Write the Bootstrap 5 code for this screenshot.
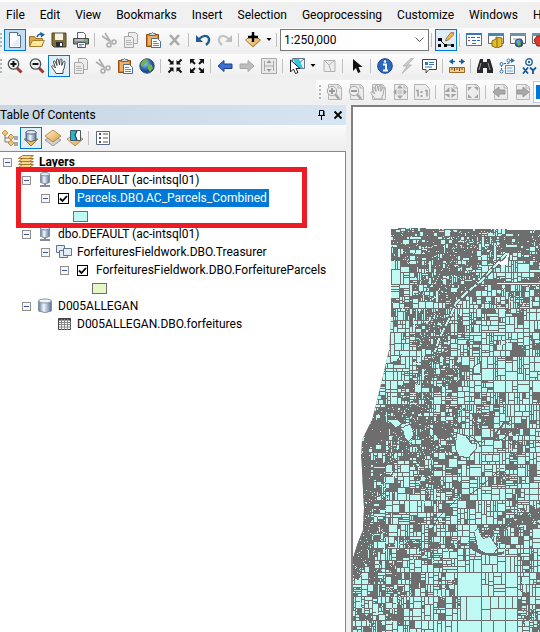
<!DOCTYPE html>
<html lang="en">
<head>
<meta charset="utf-8">
<meta name="viewport" content="width=device-width, initial-scale=1">
<title>Parcel map</title>
<link rel="stylesheet" href="https://cdn.jsdelivr.net/npm/bootstrap@5.3.0/dist/css/bootstrap.min.css">
<style>
  body { font-family: Roboto, "Open Sans", sans-serif; font-size: 12px; line-height: 18px; color: #000; background: #f0f0f0; }
  svg { display: block; flex: none; }
  .app { border-top: 2px solid #fff; }
  .menu-strip { height: 26px; gap: 15px; padding-left: 6px; }
  .menu-strip a { color: #000; text-decoration: none; white-space: nowrap; }
  .tool-strip { height: 24px; margin-bottom: 2px; background: linear-gradient(#fcfcfc, #eeeeee); overflow: hidden; }
  .tool-strip.paging { margin-left: 316px; margin-bottom: 1px; }
  .grip { flex: none; width: 2px; height: 15px; margin-right: 2px; background: repeating-linear-gradient(#b4b4b4 0 2px, transparent 2px 4px); }
  .paging .grip { margin: 0 2px 0 3px; }
  .tool { flex: none; display: flex; align-items: center; justify-content: center; width: 22px; height: 22px; padding: 0; border: 1px solid transparent; background: none; }
  .tool.pressed { border-color: #0078d7; background: #e0eefa; }
  .tool.strong { background: #c2def5; }
  .tool.caret { width: 10px; }
  .rule { flex: none; width: 2px; height: 14px; margin: 0 2px; border-left: 1px solid #c0c0c0; }
  .scale-box { flex: none; width: 149px; height: 22px; padding: 0 3px; border: 1px solid #7a7a7a; border-radius: 0; appearance: none; line-height: 18px; color: #000;
    background: #fff url("data:image/svg+xml,%3Csvg xmlns='http://www.w3.org/2000/svg' width='9' height='6'%3E%3Cpath d='M.5.5l4 4 4-4' fill='none' stroke='%23555'/%3E%3C/svg%3E") no-repeat right 4px center; }
  .page-box { flex: none; width: 100px; height: 22px; padding: 2px 3px; border: 1px solid #b4cbe0; background: linear-gradient(#0078d7, #0078d7) 2px center / 90px 14px no-repeat #fff; }
  .contents { width: 346px; }
  .contents-title { height: 20px; background: linear-gradient(90deg, #c8d5e3, #d7e4f2); }
  .contents-tools { height: 26px; background: linear-gradient(#fafafa, #eeeeee); }
  .tree-view { border-top: 1px solid #828790; border-right: 1px solid #828790; padding-top: 1px; }
  .tree-view ul { list-style: none; margin: 0; padding-left: 19px; }
  .tree-view > ul { padding-left: 3px; }
  .tree-row { height: 18px; white-space: nowrap; }
  .tree-row .glyph { margin: 0 5px 0 6px; }
  .tree-row .leaf { margin-left: 15px; }
  .fold { flex: none; width: 9px; height: 9px; padding: 0; border: 1px solid #919191; background: linear-gradient(#3c5a9a, #3c5a9a) center / 5px 1px no-repeat #f6f6f6; }
  .tick { flex: none; width: 11px; height: 11px; margin: 0 8px; border: 1px solid #000; border-radius: 0; appearance: none; background: #fff; }
  .tick:checked { background: #fff url("data:image/svg+xml,%3Csvg xmlns='http://www.w3.org/2000/svg' width='9' height='9'%3E%3Cpath d='M1 4.5l2.5 2.5L8 2' fill='none' stroke='%23000' stroke-width='1.8'/%3E%3C/svg%3E") center no-repeat; }
  .picked { padding: 0 2px; margin-left: -2px; color: #fff; background: #0078d7; }
  .swatch { width: 15px; height: 11px; margin-left: 32px; border: 1px solid #6e6e6e; }
  .swatch.aqua { background: #befaf3; }
  .swatch.lime { background: #e7f8c8; }
  .callout { position: absolute; left: 16px; top: 15px; width: 291px; height: 61px; border: 5px solid #ed1c24; pointer-events: none; }
  .map-pane { margin-left: 5px; border-left: 2px solid #808080; border-top: 2px solid #808080; min-width: 0; }
</style>
<script src="https://cdn.jsdelivr.net/npm/bootstrap@5.3.0/dist/js/bootstrap.bundle.min.js"></script>
</head>
<body>
<svg width="0" height="0" class="position-absolute" aria-hidden="true">
  <defs>
    <linearGradient id="steel" x2="1"><stop stop-color="#5f7898"/><stop offset=".4" stop-color="#f2f7fd"/><stop offset="1" stop-color="#566f90"/></linearGradient>
    <linearGradient id="amber" y2="1" x2="1"><stop stop-color="#fff3cb"/><stop offset="1" stop-color="#dd9a3a"/></linearGradient>
    <radialGradient id="sea" cx=".4" cy=".35"><stop stop-color="#8ec5f2"/><stop offset="1" stop-color="#164a9b"/></radialGradient>
  </defs>
  <symbol id="new" viewBox="0 0 16 16"><path d="M2.500.5h8l3 3v12h-11z" fill="#fff" stroke="#5d6f86"/><path d="M4 14L12 5v9z" fill="#e3edf8"/><path d="M10.500.5v3h3" fill="#dce8f4" stroke="#5d6f86"/></symbol>
  <symbol id="open" viewBox="0 0 16 16"><path d="M.5 14V4.500h5l1 2h7V14z" fill="#d9a94b" stroke="#9b7426"/><path d="M.5 14.500l3-6h12l-3 6z" fill="#ffe89b" stroke="#a9822f"/><path d="M8 5q1-3 4-3" fill="none" stroke="#1d5f9e" stroke-width="1.500"/><path d="M11 0l5 2.500-4 3z" fill="#1d5f9e"/></symbol>
  <symbol id="save" viewBox="0 0 16 16"><path d="M1 1h14v14H3l-2-2z" fill="#81703a" stroke="#4d4528"/><path d="M4 1.500h8V8H4z" fill="#f3f1e4"/><path d="M5 10h7v5H5z" fill="#292b2e"/><path d="M9 11h2v3H9z" fill="#fff"/></symbol>
  <symbol id="print" viewBox="0 0 16 16"><path d="M4.500 6V.5h6l2 2V6" fill="#fff" stroke="#596270"/><path d="M.5 6.500h15V12H.5z" fill="#8c8c88" stroke="#42474c"/><path d="M2 8h9" stroke="#e6e6dc"/><path d="M12 8h2" stroke="#62d24a" stroke-width="2"/><path d="M4.500 10.500h8v5h-8z" fill="#fff" stroke="#4c5664"/><path d="M6 12.500h5M6 14h3" stroke="#789"/></symbol>
  <symbol id="cut" viewBox="0 0 16 16"><g fill="none" stroke="#acacac" stroke-width="1.600"><path d="M4 1l5 8M1 4l9 6"/><circle cx="8" cy="13" r="2"/><circle cx="13" cy="10" r="2"/></g></symbol>
  <symbol id="copy" viewBox="0 0 16 16"><g fill="#ececec" stroke="#a8a8a8"><path d="M5.500.5h7l2 2v9h-9z"/><path d="M1.500 4.500h7l2 2v9h-9z"/></g><path d="M3 8.500h5M3 10.500h6M3 12.500h6" stroke="#b6b6b6"/></symbol>
  <symbol id="paste" viewBox="0 0 16 16"><path d="M1.500 2.500h12v12h-12z" fill="#d9852c" stroke="#8d4c16"/><path d="M3 4h9v9H3z" fill="#f0b063"/><path d="M4.500 3.500v-2h2l1-1 1 1h2v2z" fill="#d4dbe2" stroke="#626b75"/><path d="M6.500 6.500h6l3 3v6h-9z" fill="#fff" stroke="#476ea1"/><path d="M8 9.500h4M8 11.500h6M8 13.500h6" stroke="#5b8bca"/></symbol>
  <symbol id="delete" viewBox="0 0 16 16"><path d="M3 3l9 10M12 3L3 13" stroke="#aaa" stroke-width="2.600"/></symbol>
  <symbol id="undo" viewBox="0 0 16 16"><path d="M4 7q5-5 9-2 3 4-2 8" fill="none" stroke="#1f5c93" stroke-width="2.400"/><path d="M1 3v7h7z" fill="#1f5c93"/></symbol>
  <symbol id="redo" viewBox="0 0 16 16"><path d="M12 7Q7 2 3 5q-3 4 2 8" fill="none" stroke="#c5c5c5" stroke-width="2.400"/><path d="M15 3v7H8z" fill="#bdbdbd"/></symbol>
  <symbol id="add" viewBox="0 0 16 16"><path d="M.5 8L8 2.500 15.500 8 8 15z" fill="url(#amber)" stroke="#9e783c"/><path d="M8 0v10M3 5h10" stroke="#000" stroke-width="2.400"/></symbol>
  <symbol id="caret" viewBox="0 0 6 4"><path d="M.5 0h5L3 3z"/></symbol>
  <symbol id="editor" viewBox="0 0 16 16"><path d="M2 8l5 5h7" stroke="#111" fill="none"/><path d="M0 6h4v3H0zM0 12h3v3H0zM6 12h3v3H6zM13 12h3v3h-3z"/><path d="M7.500 9l1-3 5-6 3 2-6 6z" fill="#f5b94c" stroke="#74542c" stroke-width=".7"/><path d="M13.500 0l3 2" stroke="#d66b6b" stroke-width="2"/></symbol>
  <symbol id="toc" viewBox="0 0 16 16"><path d="M.5 1.500h15v12H.5z" fill="#fff" stroke="#49729e"/><path d="M0 1h16v2H0z" fill="#3877b5"/><path d="M2 5.500h2M2 8.500h2" stroke="#d13535"/><path d="M5 5.500h4M6 8.500h4M6 11.500h4M11 5.500h3M11 8.500h3" stroke="#2869c5"/></symbol>
  <symbol id="catalog" viewBox="0 0 16 16"><path d="M.5 1.500h15v10H.5z" fill="#fff" stroke="#666"/><path d="M0 1h16v3H0z" fill="#4387be"/><path d="M4 9l4-2V5l6 1v8l-5 2-5-2z" fill="#e4bd28" stroke="#856716"/><path d="M9 6v9" stroke="#856716"/></symbol>
  <symbol id="search" viewBox="0 0 16 16"><path d="M.5 1.500h15v10H.5z" fill="#fff" stroke="#666"/><path d="M0 1h16v3H0z" fill="#6c92ad"/><path d="M3 7h9" stroke="#999"/><circle cx="9" cy="11" r="4" fill="url(#sea)" stroke="#456"/><path d="M7 9l3 1 1 3-3 1z" fill="#6cb55b"/></symbol>
  <symbol id="toolbox" viewBox="0 0 16 16"><path d="M.5 1.500h15v10H.5z" fill="#fff" stroke="#666"/><path d="M0 1h16v3H0z" fill="#6c92ad"/><path d="M2 8l3-4h8v10H5z" fill="#d93a2d" stroke="#8b201a"/></symbol>
  <symbol id="zoomin" viewBox="0 0 16 16"><path d="M10 10l4.500 4.500" stroke="#a4362b" stroke-width="3"/><circle cx="6.500" cy="6" r="5.200" fill="#eef3f6" stroke="#4c5155" stroke-width="1.300"/><path d="M3.500 6h6M6.500 3v6" stroke="#111" stroke-width="2"/></symbol>
  <symbol id="zoomout" viewBox="0 0 16 16"><path d="M10 10l4.500 4.500" stroke="#a4362b" stroke-width="3"/><circle cx="6.500" cy="6" r="5.200" fill="#eef3f6" stroke="#4c5155" stroke-width="1.300"/><path d="M3.500 6h6" stroke="#111" stroke-width="2"/></symbol>
  <symbol id="hand" viewBox="0 0 16 16"><path d="M5 15.500C4 13 1 10 .7 8.500 1 7 3 8 4.500 10L2.500 4C2.500 2.500 4 2.500 4.500 4L6 7.500 5.500 2C5.600.5 7.300.5 7.500 2L8.500 7 9 2c.3-1.500 2-1.300 2 0l-.3 5.500L12.300 4c.6-1.300 2-.8 1.700.5-.5 3-.5 6-2 8v3z" fill="#fff" stroke="#454545"/></symbol>
  <symbol id="globe" viewBox="0 0 16 16"><circle cx="8" cy="8" r="7.200" fill="url(#sea)" stroke="#34506d"/><path d="M3 3q4-3 6-1l-1 3-3 1-1 3-2-1zM9 6l4 1 1 3-3 4-2-3z" fill="#72b54e"/></symbol>
  <symbol id="shrink" viewBox="0 0 16 16"><path d="M1.500 1.500l4 4M14.500 1.500l-4 4M1.500 14.500l4-4M14.500 14.500l-4-4" stroke="#111" stroke-width="2"/><path d="M6.500 2v4.500H2zM9.500 2v4.500H14zM6.500 14V9.500H2zM9.500 14V9.500H14z" fill="#111"/></symbol>
  <symbol id="grow" viewBox="0 0 16 16"><path d="M2 2l4 4M14 2l-4 4M2 14l4-4M14 14l-4-4" stroke="#111" stroke-width="2"/><path d="M1 1h5L1 6zM15 1h-5l5 5zM1 15h5l-5-5zM15 15h-5l5-5z" fill="#111"/></symbol>
  <symbol id="back" viewBox="0 0 16 16"><path d="M1 8l6-5.500V6h8v4.500H7v3z" fill="#3c6fd1" stroke="#1d3f90"/></symbol>
  <symbol id="forward" viewBox="0 0 16 16"><path d="M15 8L9 2.500V6H1v4.500h8v3z" fill="#bdbdbd" stroke="#a8a8a8"/></symbol>
  <symbol id="fit" viewBox="0 0 16 16"><path d="M.5.5h15v15H.5z" fill="#e8e8e8" stroke="#aaa"/><path d="M3 8h10M3.500 3v10M12.500 3v10" stroke="#aaa"/><path d="M8 2l2.500 3h-5zM8 14l2.500-3h-5z" fill="#999"/></symbol>
  <symbol id="select" viewBox="0 0 16 16"><path d="M3.500.5h12v10h-12z" fill="#e5f4f8" stroke="#667984"/><path d="M4 1h6l4 9H8z" fill="#38c4e3"/><path d="M10 5l5-4" stroke="#667984"/><path d="M1.500 2v12l3-3 2 4.500 2.500-1-2-4h4z" fill="#fff" stroke="#222"/></symbol>
  <symbol id="clear" viewBox="0 0 16 16"><path d="M3 2.500h11v11H3z" fill="#eee" stroke="#b3b3b3"/><path d="M4 3l4 4 5-4M8 7l2 6" fill="none" stroke="#b3b3b3"/></symbol>
  <symbol id="pointer" viewBox="0 0 16 16"><path d="M4 1v12l3-3 2 5 2.500-1-2-5h4z" fill="#111"/></symbol>
  <symbol id="info" viewBox="0 0 16 16"><circle cx="8" cy="8" r="7.300" fill="#2c68bf" stroke="#173e85"/><path d="M6 6.500h3V12M6 12.500h5" stroke="#fff" stroke-width="1.800" fill="none"/><circle cx="8" cy="3.500" r="1.300" fill="#fff"/></symbol>
  <symbol id="bolt" viewBox="0 0 16 16"><path d="M12 .5L4 8h4L3 15.500 12.500 7h-4l6-6.500z" fill="#ccc" stroke="#aaa" stroke-width=".7"/></symbol>
  <symbol id="popup" viewBox="0 0 16 16"><path d="M1.500 1.500h14v10H8L5 15v-3.500H1.500z" fill="#fff" stroke="#444"/><path d="M4 4h3v3H4z" fill="#3476c5"/><path d="M8 4.500h5M8 6.500h5M4 9h7" stroke="#3476c5"/></symbol>
  <symbol id="measure" viewBox="0 0 16 16"><path d="M2 3.500h4M10 3.500h4" stroke="#1c5c9c" stroke-width="1.500"/><path d="M0 3.500L4 .5v6zM16 3.500L12 .5v6z" fill="#1c5c9c"/><path d="M.5 9.500h15v5H.5z" fill="#f2cd8c" stroke="#9d632b"/><path d="M3 10v2M5.500 10v3M8 10v2M10.500 10v3M13 10v2" stroke="#734719"/></symbol>
  <symbol id="find" viewBox="0 0 16 16"><path d="M3 1h3v3h4V1h3l3 10v4h-6v-5H6v5H0v-4z" fill="#27292c"/><path d="M4 5l-2 7M11 5l2 7" stroke="#999"/></symbol>
  <symbol id="route" viewBox="0 0 16 16"><path d="M2.500 12V5.500h7M10 5.500V2.500h4" fill="none" stroke="#2b72a8" stroke-dasharray="2 1"/><path d="M12 0l4 2.500-4 2.500z" fill="#2b72a8"/><circle cx="2.500" cy="6" r="1.500" fill="#fff" stroke="#2b72a8"/><circle cx="9.500" cy="2.500" r="1.500" fill="#fff" stroke="#2b72a8"/><circle cx="2.500" cy="13.500" r="1.500" fill="#fff" stroke="#2b72a8"/><path d="M6.500 7.500h9v8h-9z" fill="#eef5fb" stroke="#6687a3"/><path d="M8 10h5M8 13h6" stroke="#7da4c3"/></symbol>
  <symbol id="goxy" viewBox="0 0 16 16"><circle cx="8" cy="4" r="3.200" fill="#fff" stroke="#2468a7" stroke-width="1.400"/><circle cx="8" cy="4" r="1.200" fill="#2468a7"/><path d="M2 9.500l5 6M7 9.500l-5 6M9 9.500l3 3 3-3M12 12v4" fill="none" stroke="#185998" stroke-width="1.800"/></symbol>
  <symbol id="sheet" viewBox="0 0 16 16"><path d="M2.500.5h10l3 3v12h-13z" fill="#ececec" stroke="#b5b5b5"/><path d="M12 .5V4h3.500" fill="none" stroke="#b5b5b5"/></symbol>
  <symbol id="pzoomin" viewBox="0 0 16 16"><use href="#sheet"/><path d="M9 10l4 5" stroke="#a8a8a8" stroke-width="2.600"/><circle cx="6" cy="7" r="4.700" fill="#eee" stroke="#a5a5a5"/><path d="M3 7h6M6 4v6" stroke="#999" stroke-width="2"/></symbol>
  <symbol id="pzoomout" viewBox="0 0 16 16"><use href="#sheet"/><path d="M9 10l4 5" stroke="#a8a8a8" stroke-width="2.600"/><circle cx="6" cy="7" r="4.700" fill="#eee" stroke="#a5a5a5"/><path d="M3 7h6" stroke="#999" stroke-width="2"/></symbol>
  <symbol id="phand" viewBox="0 0 16 16"><use href="#sheet"/><path d="M5 15C4 13 1 10 .7 8.500 1 7 3 8 4.500 10L2.500 4C2.500 2.500 4 2.500 4.500 4L6 7.500 5.500 2C5.600.5 7.300.5 7.500 2L8.500 7 9 2c.3-1.500 2-1.300 2 0l-.3 5.500L12.300 4c.6-1.300 2-.8 1.700.5-.5 3-.5 6-2 8V15z" fill="#eee" stroke="#a5a5a5"/></symbol>
  <symbol id="pfull" viewBox="0 0 16 16"><use href="#sheet"/><path d="M8 1l3 3.500H5zM8 15l3-3.500H5zM1 8l3.500-3v6zM15 8l-3.500-3v6z" fill="#a3a3a3"/><circle cx="8" cy="8" r="2.500" fill="#ccc"/></symbol>
  <symbol id="pactual" viewBox="0 0 16 16"><path d="M.5.5h11l4 4v11H.5z" fill="#ececec" stroke="#b5b5b5"/><path d="M2 6.500h2v6M11 6.500h2v6" fill="none" stroke="#a3a3a3" stroke-width="1.600"/><path d="M7.500 7v2M7.500 11v2" stroke="#a3a3a3" stroke-width="2"/></symbol>
  <symbol id="pshrink" viewBox="0 0 16 16"><use href="#sheet"/><path d="M7.500 3v5h-5zM9.500 3v5h5zM7.500 14v-4h-5zM9.500 14v-4h5z" fill="#a3a3a3"/></symbol>
  <symbol id="pgrow" viewBox="0 0 16 16"><use href="#sheet"/><path d="M4 3h4L4 7zM14 3h-4l4 4zM4 14h4l-4-4zM14 14h-4l4-4z" fill="#a3a3a3"/></symbol>
  <symbol id="pback" viewBox="0 0 16 16"><use href="#sheet"/><path d="M1 8l6-5v3h6v4H7v3z" fill="#a8a8a8" stroke="#999"/></symbol>
  <symbol id="pforward" viewBox="0 0 16 16"><use href="#sheet"/><path d="M15 8L9 3v3H3v4h6v3z" fill="#a8a8a8" stroke="#999"/></symbol>
  <symbol id="bydraw" viewBox="0 0 16 16"><path d="M3 3v9h5M3 8h5" fill="none" stroke="#777"/><path d="M0 3l3-3 3 3-3 3zM6 7l3-3 3 3-3 3zM6 13l3-3 3 3-3 3z" fill="#f1c36b" stroke="#a8772e" stroke-width=".7"/><path d="M12 7h4M12 9h4M12 13h4M12 15h4" stroke="#55616f"/></symbol>
  <symbol id="bysource" viewBox="0 0 16 16"><path d="M1 9h14l-7 7z" fill="#edb957" stroke="#9e7531"/><path d="M3 2v8q5 3 10 0V2z" fill="url(#steel)" stroke="#566579"/><ellipse cx="8" cy="2.300" rx="5" ry="1.800" fill="#e5eef8" stroke="#566579"/></symbol>
  <symbol id="byvis" viewBox="0 0 16 16"><path d="M0 10l8-5 8 5-8 6z" fill="#d1d1d1" stroke="#858585" stroke-width=".8"/><path d="M0 6l8-6 8 6-8 6z" fill="url(#amber)" stroke="#a57937" stroke-width=".8"/></symbol>
  <symbol id="bysel" viewBox="0 0 16 16"><path d="M0 9l8-5 8 5-8 7z" fill="url(#amber)" stroke="#a57937" stroke-width=".8"/><path d="M3.500.5h10v10h-10z" fill="#fff" stroke="#4d5965"/><path d="M4 1h6l-2 4 2 5H4z" fill="#20b7d5"/><path d="M10 1L8 5l2 5" fill="none" stroke="#111"/></symbol>
  <symbol id="options" viewBox="0 0 16 16"><path d="M1.500 1.500h13v13h-13z" fill="#fff" stroke="#586880"/><path d="M4 3h2v2H4zM4 7h2v2H4zM4 11h2v2H4z" fill="#555"/><path d="M8 4h5M8 8h5M8 12h5" stroke="#555"/></symbol>
  <symbol id="layers" viewBox="0 0 16 16"><g fill="#f8d78c" stroke="#a77932"><path d="M.5 13.500l4-3h11l-4 3z"/><path d="M.5 10.500l4-3h11l-4 3z"/><path d="M.5 7.500l4-3h11l-4 3z"/><path d="M.5 4.500l4-3h11l-4 3z"/></g></symbol>
  <symbol id="server" viewBox="0 0 16 16"><path d="M8 11v3M3 14h10" stroke="#858b92" stroke-width="2"/><path d="M3.500 2v8.500q4.500 2.500 9 0V2z" fill="url(#steel)" stroke="#8291a3"/><ellipse cx="8" cy="2.200" rx="4.500" ry="1.700" fill="#e3edf7" stroke="#8291a3"/></symbol>
  <symbol id="dataset" viewBox="0 0 16 16"><g fill="#e4edf7" stroke="#637388"><path d="M.5 1.500h8v7h-8z"/><path d="M3.500 6.500h8v7h-8z"/><path d="M7.500 4.500h8v7h-8z"/></g></symbol>
  <symbol id="database" viewBox="0 0 16 16"><path d="M1.500 3v10q6.500 3 13 0V3z" fill="url(#steel)" stroke="#8291a3"/><ellipse cx="8" cy="3" rx="6.500" ry="2" fill="#edf4fb" stroke="#8291a3"/></symbol>
  <symbol id="grid" viewBox="0 0 16 16"><path d="M2.500 2.500h12v11h-12z" fill="#fff" stroke="#444"/><path d="M2 3.500h13" stroke="#444" stroke-width="2"/><path d="M3 6.500h12M3 8.500h12M3 11h12M5.500 3v11M8.500 3v11M11.500 3v11" stroke="#888"/></symbol>
  <symbol id="pin" viewBox="0 0 10 10"><path d="M2.500 5.500v-5h4v5M1 5.500h7M4.500 6v4" fill="none" stroke="#000"/><path d="M6 1h1.500v4H6z"/></symbol>
  <symbol id="close" viewBox="0 0 10 10"><path d="M1.500 1.500l7 7M8.500 1.500l-7 7" stroke="#000" stroke-width="1.800"/></symbol>
</svg>

<div class="app d-flex flex-column vh-100 overflow-hidden">
  <nav class="menu-strip d-flex align-items-center overflow-hidden flex-shrink-0" aria-label="Main menu">
    <a href="#">File</a><a href="#">Edit</a><a href="#">View</a><a href="#">Bookmarks</a><a href="#">Insert</a><a href="#">Selection</a><a href="#">Geoprocessing</a><a href="#">Customize</a><a href="#">Windows</a><a href="#">Help</a>
  </nav>
  <div class="tool-strip d-flex align-items-center flex-shrink-0" role="toolbar" aria-label="Standard" data-tools="new! open save print | cut copy paste delete | undo redo | add caret | scale | editor* | toc catalog search toolbox"></div>
  <div class="tool-strip d-flex align-items-center flex-shrink-0" role="toolbar" aria-label="Tools" data-tools="zoomin zoomout hand* copy cut paste globe | shrink grow | back forward fit | select caret clear | pointer | info bolt popup | measure | find route goxy"></div>
  <div class="tool-strip paging d-flex align-items-center flex-shrink-0" role="toolbar" aria-label="Layout" data-tools="pzoomin pzoomout phand pfull pactual | pshrink pgrow | pback pforward page"></div>

  <div class="d-flex flex-grow-1 overflow-hidden">
    <aside class="contents d-flex flex-column flex-shrink-0">
      <header class="contents-title d-flex align-items-center flex-shrink-0">
        <span class="me-auto">Table Of Contents</span>
        <button class="tool" style="width:15px" aria-label="Auto hide"><svg width="10" height="10"><use href="#pin"/></svg></button>
        <button class="tool" style="width:17px" aria-label="Close"><svg width="10" height="10"><use href="#close"/></svg></button>
      </header>
      <div class="contents-tools d-flex align-items-center flex-shrink-0">
        <button class="tool" style="width:20px" aria-label="List by drawing order"><svg width="16" height="16"><use href="#bydraw"/></svg></button>
        <button class="tool pressed" aria-label="List by source"><svg width="16" height="16"><use href="#bysource"/></svg></button>
        <button class="tool" aria-label="List by visibility"><svg width="16" height="16"><use href="#byvis"/></svg></button>
        <button class="tool" aria-label="List by selection"><svg width="16" height="16"><use href="#bysel"/></svg></button>
        <span class="rule"></span>
        <button class="tool" aria-label="Options"><svg width="16" height="16"><use href="#options"/></svg></button>
      </div>
      <div class="tree-view position-relative bg-white flex-grow-1">
        <ul>
          <li>
            <div class="tree-row d-flex align-items-center"><button class="fold" aria-label="Collapse"></button><svg class="glyph" width="16" height="16"><use href="#layers"/></svg><b>Layers</b></div>
            <ul>
              <li>
                <div class="tree-row d-flex align-items-center"><button class="fold" aria-label="Collapse"></button><svg class="glyph" width="16" height="16"><use href="#server"/></svg><span>dbo.DEFAULT (ac-intsql01)</span></div>
                <ul><li>
                  <div class="tree-row d-flex align-items-center"><button class="fold" aria-label="Collapse"></button><input class="tick" type="checkbox" id="parcels" checked><label for="parcels"><span class="picked d-block">Parcels.DBO.AC_Parcels_Combined</span></label></div>
                  <div class="tree-row d-flex align-items-center"><span class="swatch aqua"></span></div>
                </li></ul>
              </li>
              <li>
                <div class="tree-row d-flex align-items-center"><button class="fold" aria-label="Collapse"></button><svg class="glyph" width="16" height="16"><use href="#server"/></svg><span>dbo.DEFAULT (ac-intsql01)</span></div>
                <ul><li>
                  <div class="tree-row d-flex align-items-center"><button class="fold" aria-label="Collapse"></button><svg class="glyph" width="16" height="16"><use href="#dataset"/></svg><span>ForfeituresFieldwork.DBO.Treasurer</span></div>
                  <ul><li>
                    <div class="tree-row d-flex align-items-center"><button class="fold" aria-label="Collapse"></button><input class="tick" type="checkbox" id="forfeits" checked><label for="forfeits">ForfeituresFieldwork.DBO.ForfeitureParcels</label></div>
                    <div class="tree-row d-flex align-items-center"><span class="swatch lime"></span></div>
                  </li></ul>
                </li></ul>
              </li>
              <li>
                <div class="tree-row d-flex align-items-center"><button class="fold" aria-label="Collapse"></button><svg class="glyph" width="16" height="16"><use href="#database"/></svg><span>D005ALLEGAN</span></div>
                <ul><li>
                  <div class="tree-row d-flex align-items-center"><svg class="glyph leaf" width="16" height="16"><use href="#grid"/></svg><span>D005ALLEGAN.DBO.forfeitures</span></div>
                </li></ul>
              </li>
            </ul>
          </li>
        </ul>
        <div class="callout"></div>
      </div>
    </aside>
    <main class="map-pane bg-white flex-grow-1 overflow-hidden">
      <svg id="map" width="187" height="525" viewBox="353 107 187 525" role="img" aria-label="County parcels">
        <defs><clipPath id="county"><path d="M391 229h7v-1h28v1h81v1h33v402H353v-74l4-13 6-15 1-22-2-38-1-14 1-16 10-20 10-40 7-30 2-33z"/></clipPath></defs>
        <g clip-path="url(#county)" shape-rendering="crispEdges">
          <path d="M350 226h192v408H350z" fill="#6e6e6e"/>
          <path id="lots" fill="#befaf3"/>
          <g fill="#6e6e6e">
            <path d="M366 428l6-8 14 2 5 4-6 3-8 4 3 6-8 2-3 10-7 4zM392 430l8-4 8 6-4 8-6-2zM422 436l4-6 5 12 4 8-6 2zM434 428l6-8 10 4 4 6-8 10-9-2z"/>
            <path d="M362 448l8 4 1 18-1 20 4 12-4 20 1 20-6 20-6 18-7-2v-17l8-26z"/>
            <path d="M505 520l8-3 2 4 10-9 9 2 6-3v9l-16 4-12 4-7-2z"/>
            <path d="M468 541l8 2 7 8 9 3 12-3v3l-10 2-12-1-10-5z"/>
          </g>
          <g fill="#befaf3" stroke="#6e6e6e">
            <path d="M474 532l4-4 5 11 7-3 8 12-4 5-8 1-8-5z"/>
            <path d="M457 433l9 3 6 8 5-1-1 6-8 9-9-2-4-8z"/>
            <path d="M473 367l8-5-1 11-6 1z"/>
            <path d="M391 356l10-1-4 6-7 2z"/>
            <path d="M387 420l10-1 5 5-6 4zM402 428l8-4 4 8-3 12-6-6z"/>
          </g>
          <path id="specks" fill="#befaf3"/>
          <g fill="none" stroke="#6e6e6e">
            <path d="M507 253l-26 28-15 12-10 10-5 12-12 24-4 13" stroke-width="4"/>
            <path d="M507 253l-26 28-15 12-10 10-5 12-12 24-4 13" stroke="#befaf3" stroke-width="2" stroke-dasharray="9 2"/>
            <path d="M500 470l-26 22-18 8-18 18-9 17M412 432q10-12 20-3 8 12 18 2 6-5 8-14M460 434q18 3 20 13 4-10 12-8 12 4 16-6M381 477l9-20 26-22M521 530l-1 60 8 8v20"/>
            <path d="M491 420l4 14 10-12" stroke-width="2"/>
          </g>
          <path d="M495 264l9-4 5-8-1 11-3 2z" fill="#fff"/>
          <path d="M497 283.500h43" stroke="#fff"/>
          <path d="M497 282.500h43M497 284.500h43" stroke="#6e6e6e"/>
        </g>
      </svg>
    </main>
  </div>
</div>

<script>
  // Toolbars
  const plainButton = (name, mod) =>
    `<button class="tool${mod ? ' pressed' : ''}${mod === '!' ? ' strong' : ''}" aria-label="${name}"><svg width="16" height="16"><use href="#${name}"/></svg></button>`;
  document.querySelectorAll('[data-tools]').forEach(bar => {
    bar.innerHTML = '<span class="grip"></span>' + bar.dataset.tools.split(' ').map(t => {
      if (t === '|') return '<span class="rule"></span>';
      if (t === 'caret') return '<button class="tool caret" aria-label="More"><svg width="6" height="4"><use href="#caret"/></svg></button>';
      if (t === 'scale') return '<select class="scale-box" aria-label="Map scale"><option>1:250,000</option></select>';
      if (t === 'page') return '<input class="page-box" type="text" aria-label="Zoom percent">';
      const [, name, mod] = t.match(/^(\w+)([!*]?)$/);
      return plainButton(name, mod);
    }).join('');
  });

  // Parcel density per 12px block, 0 = whole sections, 9 = town lots
  const density = `
...9799689868998
...8688787677998
...8668886753445
...2445676533113
...1357787545456
...3457775435545
...7763472555654
...3476764434333
...0377744322333
...0477745446455
..33157744334334
..33266552333212
..32577664333333
.323664633433333
.445775344444223
.778865457764233
.994686682535634
.996738461246544
.945877672212544
.955466343223443
.945355343345433
.964355564343333
.863135563322444
.853134442223557
.854345543238867
.864324443556243
.756657654416143
8744455432221142
7656443320020053
4554444350000054
4445542560001163
5465342430000074
4666432310000055
3533231210000034`.trim().split('\n');
  let seed = 4127;
  const rnd = () => (seed = (seed * 1664525 + 1013904223) >>> 0) / 4294967296;
  const dens = (x, y) => {
    const row = density[Math.max(0, Math.min(33, Math.floor((y - 228) / 12)))];
    const c = row[Math.max(0, Math.min(15, Math.floor((x - 352) / 12)))];
    return c === '.' ? 6 : +c;
  };
  const size = [30, 16, 11, 9, 7, 6, 6, 5, 5, 4];
  let d = '', s = '';
  function lot(x, y, w, h) {
    const k = dens(x + w / 2, y + h / 2);
    let peak = k;
    if (w > 9 || h > 9) for (const a of [.15, .85]) for (const b of [.15, .85]) peak = Math.max(peak, dens(x + w * a, y + h * b));
    const m = Math.max(w, h);
    if (m > 3 && m > size[peak] * (.5 + rnd() * 1.1)) {
      const vertical = w > 14 && h > 14 ? w >= h : rnd() < (w / (w + h) - .5) * 1.2 + .5;
      const side = vertical ? w : h;
      if (side > 3) {
        const cut = Math.max(2, Math.min(side - 2, Math.round(side * (side > 20 && rnd() < .6 ? .5 : .25 + rnd() * .5))));
        if (vertical) { lot(x, y, cut, h); lot(x + cut, y, w - cut, h); }
        else { lot(x, y, w, cut); lot(x, y + cut, w, h - cut); }
        return;
      }
    }
    const near = dens(x + (rnd() - .5) * 14, y + (rnd() - .5) * 14);
    if (m < 12 && near > 2 && rnd() < (near - 2) * .125) return;
    d += `M${x + 1} ${y + 1}h${w - 1}v${h - 1}h${1 - w}z`;
  }
  for (let x = 337; x < 540; x += 24) for (let y = 212; y < 632; y += 24) lot(x, y, 24, 24);
  // Tiny lots scattered through the built-up areas
  for (let i = 0; i < 3600; i++) {
    const x = 353 + Math.floor(rnd() * 187), y = 229 + Math.floor(rnd() * 402);
    const k = dens(x, y);
    if (k > 4 && (k < 9 || rnd() < .25)) s += `M${x} ${y}h${rnd() < .35 ? 2 : 1}v1h-1z`;
  }
  document.getElementById('lots').setAttribute('d', d);
  document.getElementById('specks').setAttribute('d', s);
</script>
</body>
</html>
